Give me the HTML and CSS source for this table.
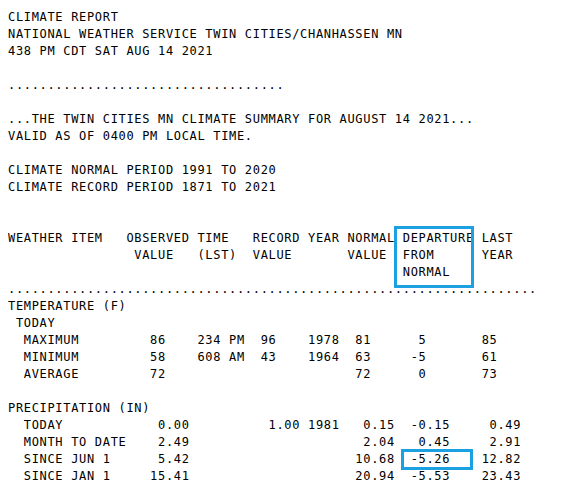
FILE: index.html
```html
<!DOCTYPE html>
<html lang="en">

<head>
    <meta charset="UTF-8">
    <meta name="viewport" content="width=device-width, initial-scale=1.0">
    <title>Climate Report</title>
    <link rel="stylesheet" href="styles.css">
</head>

<body>
    <div class="report">
<pre class="report-text">CLIMATE REPORT
NATIONAL WEATHER SERVICE TWIN CITIES/CHANHASSEN MN
438 PM CDT SAT AUG 14 2021

...................................

...THE TWIN CITIES MN CLIMATE SUMMARY FOR AUGUST 14 2021...
VALID AS OF 0400 PM LOCAL TIME.

CLIMATE NORMAL PERIOD 1991 TO 2020
CLIMATE RECORD PERIOD 1871 TO 2021


WEATHER ITEM   OBSERVED TIME   RECORD YEAR NORMAL DEPARTURE LAST
                VALUE   (LST)  VALUE       VALUE  FROM      YEAR
                                                  NORMAL
...................................................................
TEMPERATURE (F)
 TODAY
  MAXIMUM         86    234 PM  96    1978  81      5       85
  MINIMUM         58    608 AM  43    1964  63     -5       61
  AVERAGE         72                        72      0       73

PRECIPITATION (IN)
  TODAY            0.00          1.00 1981   0.15  -0.15     0.49
  MONTH TO DATE    2.49                      2.04   0.45     2.91
  SINCE JUN 1      5.42                     10.68  -5.26    12.82
  SINCE JAN 1     15.41                     20.94  -5.53    23.43</pre>

        <!-- kotak penanda -->
        <div class="mark mark-departure"></div>
        <div class="mark mark-jun"></div>
    </div>
</body>

</html>
```

FILE: styles.css
```css
body {
    margin: 8px;
    background-color: #fff;
}

.report {
    position: relative;
    padding-top: 1px;
}

.report-text {
    margin: 0;
    font-family: "DejaVu Sans Mono", monospace;
    font-size: 12px;
    letter-spacing: 0.67px;
    line-height: 17px;
    color: #000;
}

.mark {
    position: absolute;
    border: 3px solid #1ba1e2;
}

.mark-departure {
    left: 386px;
    top: 218px;
    width: 74px;
    height: 56px;
}

.mark-jun {
    left: 393px;
    top: 441px;
    width: 66px;
    height: 15px;
}
```
